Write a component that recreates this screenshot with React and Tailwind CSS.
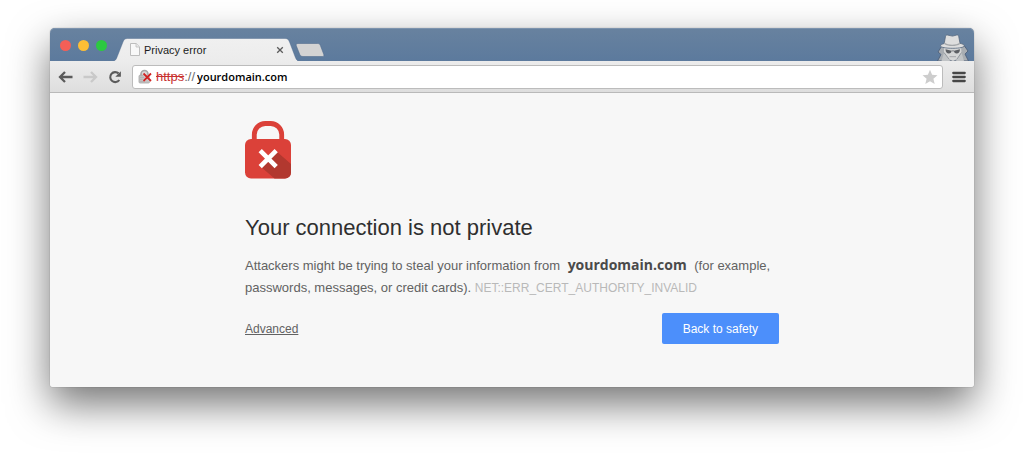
function TrafficLights() {
  return (
    <div className="flex items-center gap-[7px] pt-3">
      <button aria-label="Close window" className="size-[11px] rounded-full bg-[#f45f57]" />
      <button aria-label="Minimize window" className="size-[11px] rounded-full bg-[#fdbe35]" />
      <button aria-label="Zoom window" className="size-[11px] rounded-full bg-[#2cc940]" />
    </div>
  );
}

function PageIcon() {
  return (
    <svg viewBox="0 0 10 13" className="h-[13px] w-[10px] shrink-0" aria-hidden="true">
      <path d="M.5.5h5.7L9.500 3.800v8.700h-9z" fill="#f8f8f8" stroke="#bdbdbd" />
      <path d="M6 .5V4h3.500" fill="#e9e9e9" stroke="#bdbdbd" strokeWidth=".8" />
    </svg>
  );
}

function Tab() {
  return (
    <div className="relative flex h-[23px] w-[184px] items-center pl-4 pr-[14px]">
      <svg viewBox="0 0 184 23" preserveAspectRatio="none" className="absolute inset-0 size-full" aria-hidden="true">
        <defs>
          <linearGradient id="tabFill" x2="0" y2="1">
            <stop offset="0" stopColor="#f0f0f0" />
            <stop offset="1" stopColor="#ececec" />
          </linearGradient>
        </defs>
        <path d="M0 23C2 22 2.500 20.500 3.300 18.500L9 4C10 1.500 11 .5 13.500.5H171c2.500 0 3.500 1 4.500 3.500l5.500 14.500c.8 2 1.500 3.500 3 4.500z" fill="url(#tabFill)" />
        <path d="M0 23C2 22 2.500 20.500 3.300 18.500L9 4C10 1.500 11 .5 13.500.5H171c2.500 0 3.500 1 4.500 3.500l5.500 14.500c.8 2 1.500 3.500 3 4.500" fill="none" stroke="#4c678a" strokeOpacity=".4" />
      </svg>
      <div className="relative flex grow items-center gap-1">
        <PageIcon />
        <span className="text-[11px] leading-4 text-[#1c1c1c]">Privacy error</span>
        <button aria-label="Close tab" className="ml-auto">
          <svg viewBox="0 0 8 8" className="size-2" aria-hidden="true">
            <path d="M1.200 1.200l5.600 5.600M6.800 1.200L1.200 6.800" stroke="#5b5b5b" strokeWidth="1.300" />
          </svg>
        </button>
      </div>
    </div>
  );
}

function NewTabButton() {
  return (
    <button aria-label="New tab" className="-ml-[3px] mb-[3px]">
      <svg viewBox="0 0 30 16" className="h-4 w-[30px]" aria-hidden="true">
        <path d="M3 1.500h19.500c1.500 0 2.300.6 2.900 2l3.300 8.700c.6 1.600.1 2.300-1.500 2.300H8c-1.700 0-2.700-.7-3.300-2.200L1.300 3.800C.8 2.300 1.400 1.500 3 1.500z" fill="#d3d3d3" stroke="#4c678a" strokeOpacity=".55" />
      </svg>
    </button>
  );
}

function IncognitoIcon() {
  return (
    <svg viewBox="0 0 34 27" className="h-[27px] w-[34px]" role="img" aria-label="Incognito">
      <path d="M1.500 27L5 20.500 2 18l3.500-5.500 4 1h14l5-1.500L32 17l-3 3 3.500 7z" fill="#a8adb2" stroke="#4e6079" strokeWidth=".9" />
      <path d="M8 12h17l.5 7-4 5.500L17 27l-5-2.500L8 19z" fill="#d5d6d6" />
      <path d="M8 18.500l5 6.500 1 2H5.500zM25.500 18.500L21 25l-1 2h8z" fill="#c1c4c6" />
      <path d="M8 18.500l5 6.500M25.500 18.500L21 25" stroke="#878d93" strokeWidth=".8" />
      <path d="M9.500 15.200l6 1.600c0 2-1 2.700-2.700 2.700-1.900 0-3.100-1.300-3.300-4.300zM24 15.200l-6 1.600c0 2 1 2.700 2.700 2.700 1.900 0 3.100-1.300 3.300-4.300z" fill="#5c5f63" />
      <path d="M15.500 16.900h2.500" stroke="#7a7e82" />
      <path d="M13.500 22.700h6.500" stroke="#a3a6a9" />
      <path d="M8.200 9.500L9.500 2.300C9.700 1.200 10.700.9 11.700 1.100l4.800 1 4-1c1.100-.3 2 .1 2.200 1.200L24 9.300c2.600.6 4.300 1.500 4.300 2.400 0 1.500-4.500 2.600-11.500 2.600S4.500 13.300 4.500 11.900c0-.9 1.400-1.800 3.700-2.400z" fill="#dedede" stroke="#56677d" strokeWidth=".8" />
      <path d="M8.400 8.500c4 3 11.600 3 15.500 0l.2 1.500c-4 2.700-11.900 2.700-15.900 0z" fill="#a4a7aa" />
    </svg>
  );
}

function TitleBar() {
  return (
    <div className="flex h-[33px] items-end rounded-t-[5px] bg-linear-to-b from-[#68829f] to-[#5c7a9d] pl-[10px] pr-1 shadow-[inset_0_1px_0_#7d93ad]">
      <div className="self-start">
        <TrafficLights />
      </div>
      <div className="ml-[7px] flex items-end">
        <Tab />
        <NewTabButton />
      </div>
      <div className="ml-auto">
        <IncognitoIcon />
      </div>
    </div>
  );
}

function BadLockIcon() {
  return (
    <svg viewBox="0 0 15 15" className="size-[15px] shrink-0" aria-hidden="true">
      <path d="M3 7V5a3.500 3.500 0 0 1 7 0v2" fill="#d9d9d9" stroke="#a6a6a6" strokeWidth="1.600" />
      <rect x="1" y="6.200" width="10.500" height="7.800" rx="1" fill="#c2c2c2" stroke="#a6a6a6" strokeWidth=".8" />
      <path d="M2 8.500h4M2 10.500h4M2 12.500h5" stroke="#b0b0b0" strokeWidth=".8" />
      <path d="M5.500 4.500l7.500 7.500M13 4.500L5.500 12" stroke="#fff" strokeOpacity=".4" strokeWidth="3" />
      <path d="M5.500 4.500l7.500 7.500M13 4.500L5.500 12" stroke="#cf2424" strokeWidth="1.800" />
    </svg>
  );
}

function Toolbar() {
  return (
    <div className="flex h-8 items-center border-b border-[#b9b9b9] bg-linear-to-b from-[#ececec] to-[#dedede] pl-2 pr-2">
      <div className="flex items-center gap-[10px]">
        <button aria-label="Back">
          <svg viewBox="0 0 15 12" className="h-3 w-[15px]" aria-hidden="true">
            <path d="M14.500 6H2.500M7 1L2 6l5 5" fill="none" stroke="#5b5b5b" strokeWidth="2.300" />
          </svg>
        </button>
        <button aria-label="Forward" disabled>
          <svg viewBox="0 0 15 12" className="h-3 w-[15px]" aria-hidden="true">
            <path d="M.5 6h12M8 1l5 5-5 5" fill="none" stroke="#c9c9c9" strokeWidth="2.300" />
          </svg>
        </button>
        <button aria-label="Reload">
          <svg viewBox="0 0 14 14" className="size-[14px]" aria-hidden="true">
            <path d="M11.300 10A5 5 0 1 1 10.600 3.400" fill="none" stroke="#5b5b5b" strokeWidth="2.100" />
            <path d="M12.900 1.200v5.600H7.300z" fill="#5b5b5b" />
          </svg>
        </button>
      </div>
      <div className="ml-[10px] flex h-6 grow items-center rounded-[3px] border border-[#bcbcbc] bg-white pl-[5px] pr-1">
        <BadLockIcon />
        <label htmlFor="address" className="ml-[3px] shrink-0 text-[13px] leading-4 text-[#6d6d6d]">
          <span className="text-[#c8312f] line-through">https</span>://
        </label>
        <input
          id="address"
          type="text"
          defaultValue="yourdomain.com"
          className="ml-[2px] min-w-0 grow bg-transparent font-['Open_Sans',sans-serif] text-[11px] font-semibold leading-4 text-black outline-none"
        />
        <button aria-label="Bookmark this page">
          <svg viewBox="0 0 16 16" className="size-4" aria-hidden="true">
            <path d="M8 .8l2.100 4.900 5.400.5-4.100 3.500 1.300 5.300L8 12.200 3.300 15l1.300-5.300L.5 6.200l5.400-.5z" fill="#cdcdcd" />
          </svg>
        </button>
      </div>
      <button aria-label="Menu" className="ml-[9px]">
        <svg viewBox="0 0 14 12" className="h-3 w-[14px]" aria-hidden="true">
          <path d="M1.300 2h11.400M1.300 6h11.400M1.300 10h11.400" stroke="#474747" strokeWidth="2.300" strokeLinecap="round" />
        </svg>
      </button>
    </div>
  );
}

function WarningLock() {
  return (
    <svg viewBox="0 0 46 58" className="h-[58px] w-[46px]" role="img" aria-label="Not secure">
      <path d="M9.300 20v-6.500A11 11 0 0 1 20.300 2.500h5.400A11 11 0 0 1 36.700 13.500V20" fill="none" stroke="#db4139" strokeWidth="4.800" />
      <rect y="18" width="46" height="39.500" rx="6" fill="#db4139" />
      <path d="M30.500 29.500L46 43V51.500a6 6 0 0 1-6 6H29.500L15.500 45.500z" fill="#b2382f" />
      <path d="M15.200 29.700l16 16M31.200 29.700l-16 16" stroke="#fff" strokeWidth="4.600" />
    </svg>
  );
}

function Warning() {
  return (
    <main className="rounded-b-[3px] bg-[#f7f7f7] px-5 pb-[43px] pt-7">
      <div className="mx-auto max-w-[534px]">
        <WarningLock />
        <h1 className="mt-[35px] text-[22px] leading-7 text-[#2f2f2f]">Your connection is not private</h1>
        <p className="mt-[13px] text-[13px] leading-[22px] text-[#626262]">
          Attackers might be trying to steal your information from{" "}
          <strong className="mx-1 font-['Open_Sans',sans-serif] text-[14px] font-bold leading-none text-[#4a4a4a]">yourdomain.com</strong>{" "}
          (for example, passwords, messages, or credit cards).{" "}
          <span className="text-[12px] text-[#b9b9b9]">NET::ERR_CERT_AUTHORITY_INVALID</span>
        </p>
        <div className="mt-[14px] flex items-center justify-between">
          <a href="#advanced" className="text-[12px] leading-4 text-[#626262] underline">Advanced</a>
          <button className="h-[31px] rounded-[2px] bg-[#4c8ffb] px-[21px] text-[12px] text-white">Back to safety</button>
        </div>
      </div>
    </main>
  );
}

export default function App() {
  return (
    <div className="min-h-screen bg-white px-[50px] pb-[72px] pt-7 font-['Liberation_Sans',Arial,sans-serif]">
      <div className="rounded-t-[5px] rounded-b-[3px] shadow-[0_0_1px_rgba(0,0,0,0.5),0_17px_40px_rgba(0,0,0,0.55)]">
        <TitleBar />
        <Toolbar />
        <Warning />
      </div>
    </div>
  );
}
